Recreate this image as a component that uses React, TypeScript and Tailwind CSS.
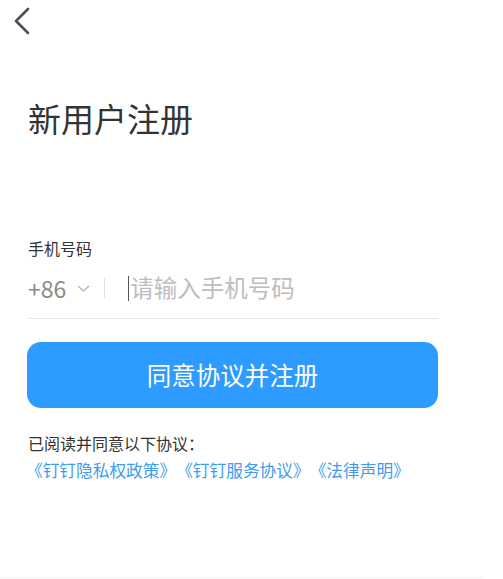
import React from "react";

export default function App() {
  const font = { fontFamily: '"Noto Sans CJK SC", "Noto Sans", sans-serif' };
  return (
    <div
      className="h-[578px] w-[483px] bg-white border-b border-[#f0f0f0] flex flex-col [text-spacing-trim:space-all]"
      style={font}
    >
      <div className="h-[42px] pl-[13px] pt-[7px]">
        <svg width="20" height="28" viewBox="0 0 20 28" fill="none">
          <polyline
            points="15,2 3,14 15,26"
            stroke="#4b4f58"
            strokeWidth="2.6"
            strokeLinecap="round"
            strokeLinejoin="round"
          />
        </svg>
      </div>
      <div className="px-[28px] flex flex-col">
        <h1 className="mt-[54px] text-[33px] leading-[44px] text-[#333] font-normal">
          新用户注册
        </h1>
        <div className="mt-[97px] text-[16px] leading-[22px] text-[#333]">手机号码</div>
        <div className="mt-[9px] pb-[10px] border-b border-[#e6e6e6] w-[410px]">
          <div className="h-[40px] flex items-center">
            <span className="text-[23px] text-[#8a8a8a] leading-none">+86</span>
            <svg className="ml-[11px]" width="13" height="7" viewBox="0 0 13 7" fill="none">
              <polyline points="1,1 6.5,6 12,1" stroke="#b0b0b0" strokeWidth="1.2" />
            </svg>
            <div className="ml-[14px] w-px h-[20px] bg-[#e3e3e3]" />
            <div className="ml-[23px] w-px h-[25px] bg-[#555]" />
            <span className="ml-px text-[23.5px] text-[#bdbdbd] leading-none">请输入手机号码</span>
          </div>
        </div>
        <button className="mt-[23px] h-[66px] w-[411px] -ml-px rounded-[14px] bg-[#2d9bff] text-white text-[24.5px] flex items-center justify-center">
          同意协议并注册
        </button>
        <div className="mt-[24px] text-[16px] leading-[22px] text-[#333]">已阅读并同意以下协议：</div>
        <div className="mt-[5px] -ml-[2px] text-[16.7px] leading-[22px] text-[#3d9cf0] whitespace-nowrap">
          《钉钉隐私权政策》《钉钉服务协议》《法律声明》
        </div>
      </div>
    </div>
  );
}
